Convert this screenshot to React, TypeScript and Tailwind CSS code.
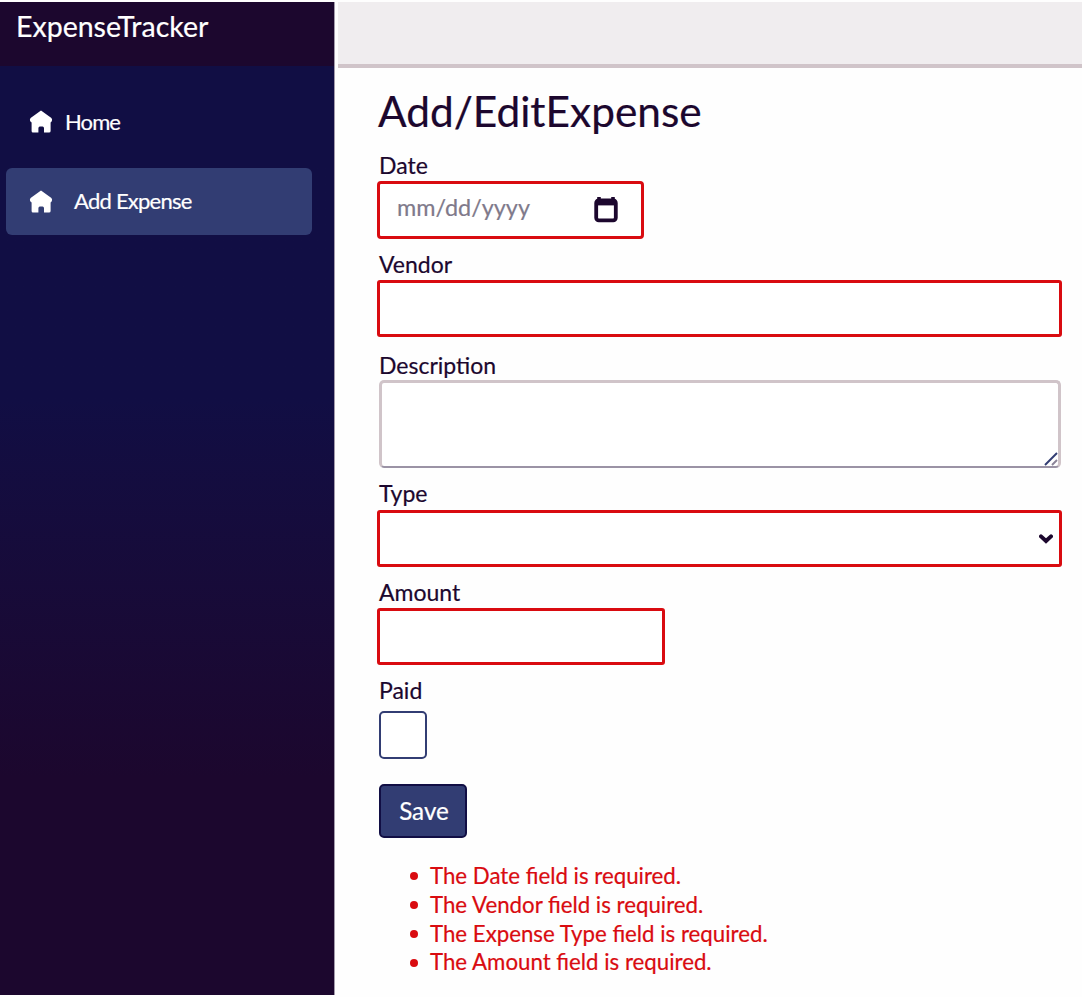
import type { ReactNode } from "react";

function HomeIcon() {
  return (
    <svg viewBox="0 0 24 24" className="h-6 w-6 shrink-0" fill="#fff">
      <path d="M12 0.6 L22.4 8 Q23.6 9.2 22.8 11.2 L21.6 12.4 V21 Q21.6 22.6 20 22.6 H15 V18 Q14.9 16.6 13.6 16.4 H10.8 Q9.6 16.6 9.4 18 V22.6 H4 Q2.6 22.6 2.6 21 V12.4 L1.2 11.2 Q0.4 9.2 1.6 8 Z" />
    </svg>
  );
}

function Label({ children, className }: { children: ReactNode; className: string }) {
  return <label className={`block whitespace-nowrap pl-0.5 text-[23px] leading-7 ${className}`}>{children}</label>;
}

const errors = [
  "The Date field is required.",
  "The Vendor field is required.",
  "The Expense Type field is required.",
  "The Amount field is required.",
];

export default function App() {
  return (
    <div className="flex h-[997px] w-[1082px] overflow-hidden bg-[#fefefe] pt-0.5 font-['Lato','Liberation_Sans',sans-serif] text-[#1c072e] [-webkit-text-stroke:0.2px]">
      <aside className="flex h-[993px] w-[335px] shrink-0 flex-col border-r border-[#a39bab] bg-linear-to-b from-[#110e44] from-40% to-[#1c072e] to-78% text-white">
        <div className="h-16 bg-[#1c072e] pl-4 pt-1.5">
          <div className="whitespace-nowrap text-[28.5px] leading-9">ExpenseTracker</div>
        </div>
        <nav className="flex flex-col pt-[22px] text-[22px] leading-7">
          <a className="ml-1.5 flex h-[67px] w-[306px] items-center pl-[23px]">
            <HomeIcon />
            <span className="ml-3 tracking-[-0.9px]">Home</span>
          </a>
          <a className="ml-1.5 mt-[13px] flex h-[67px] w-[306px] items-center rounded-md bg-[#323d73] pl-[23px]">
            <HomeIcon />
            <span className="-mt-0.5 ml-[21px] tracking-[-0.76px]">Add Expense</span>
          </a>
        </nav>
      </aside>
      <main className="flex grow flex-col">
        <header className="ml-[3px] h-[66px] border-b-4 border-[#d0c4c9] bg-[#f0edef]" />
        <form className="flex flex-col items-start pl-[42px]">
          <h1 className="mt-[15px] h-[56px] whitespace-nowrap pl-px text-[42.4px] leading-[56px]">Add/EditExpense</h1>
          <Label className="mt-[12px]">Date</Label>
          <div className="mt-[2px] flex h-[58px] w-[267px] items-center justify-between rounded-[4px] border-[3px] border-[#d90b10] bg-white pl-[17px] pr-[22px]">
            <span className="-mt-1 text-[23.4px] text-[#807a8b]">mm/dd/yyyy</span>
            <svg viewBox="0 0 24 26" className="mr-px h-[26px] w-6" fill="none">
              <path d="M5 0.6 V4 M19 0.6 V4" stroke="#1c072e" strokeWidth="3.6" strokeLinecap="round" />
              <rect x="2.2" y="3.4" width="19.6" height="20" rx="2.6" stroke="#1c072e" strokeWidth="3.8" />
              <path d="M2.4 5.4 H21.6" stroke="#1c072e" strokeWidth="6" />
            </svg>
          </div>
          <Label className="mt-[11px]">Vendor</Label>
          <input className="mt-[2px] h-[57px] w-[685px] rounded-[3px] border-[3px] border-[#d90b10] bg-white" />
          <Label className="mt-[14px]">Description</Label>
          <div className="ml-0.5 mt-px flex h-[88px] w-[682px] items-end justify-end rounded-[5px] border-[3px] border-b-2 border-[#d0c4c9] border-b-[#9b93a5] bg-white">
            <svg viewBox="0 0 14 14" className="h-3.5 w-3.5" fill="none" stroke="#323d73" strokeWidth="1.9">
              <path d="M1 13 L13 1" />
              <path d="M8 13 L13 8" stroke="#8b8398" />
            </svg>
          </div>
          <Label className="mt-[11px]">Type</Label>
          <div className="mt-[3px] flex h-[57px] w-[685px] items-center justify-end rounded-[3px] border-[3px] border-[#d90b10] bg-white pr-1.5">
            <svg viewBox="0 0 14 10" className="h-2.5 w-3.5" fill="none" stroke="#1c072e" strokeWidth="4" strokeLinecap="round">
              <path d="M2 2.4 L7 7 L12 2.4" />
            </svg>
          </div>
          <Label className="mt-[11px]">Amount</Label>
          <input className="mt-[2px] h-[57px] w-[288px] rounded-[3px] border-[3px] border-[#d90b10] bg-white" />
          <Label className="mt-[11px]">Paid</Label>
          <div className="ml-0.5 mt-[7px] h-12 w-12 rounded-[5px] border-2 border-[#323d73] bg-white" />
          <button type="button" className="ml-0.5 mt-[25px] h-[54px] w-[88px] rounded-[5px] border-2 border-[#110e44] bg-[#323d73] pl-0.5 text-[24.2px] text-white">
            Save
          </button>
          <ul className="mt-[23px] pt-px text-[22.25px] leading-[28.8px] text-[#d90b10]">
            {errors.map((e) => (
              <li key={e} className="flex items-center pl-[33px]">
                <span className="h-2 w-2 rounded-full bg-[#d90b10]" />
                <span className="ml-3 whitespace-nowrap">{e}</span>
              </li>
            ))}
          </ul>
        </form>
      </main>
    </div>
  );
}
